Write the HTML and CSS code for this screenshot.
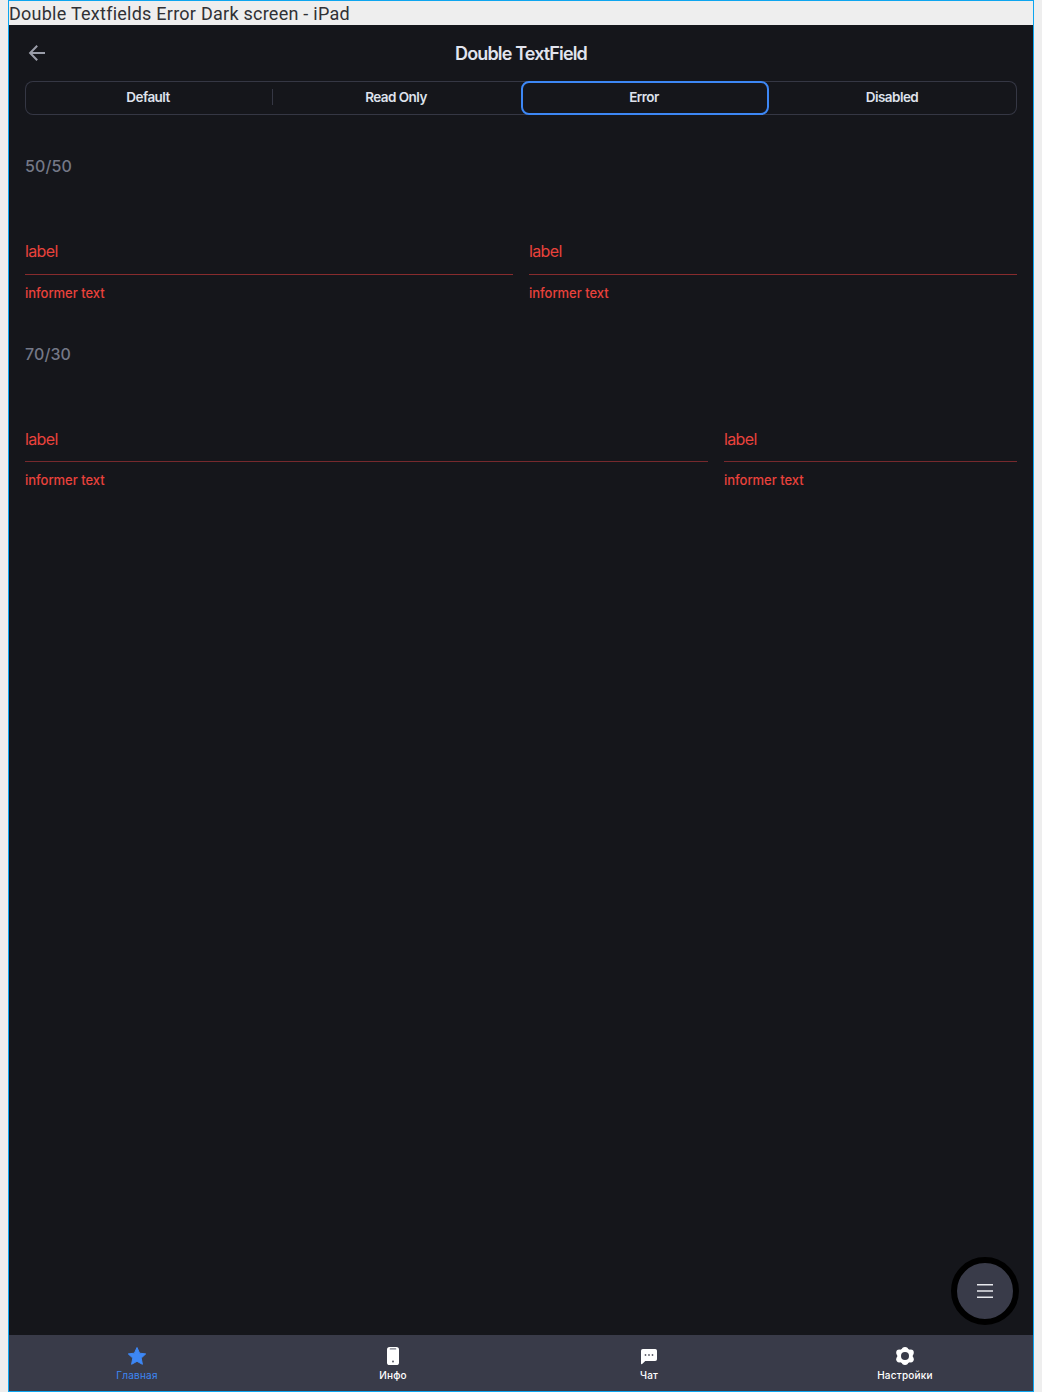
FILE: index.html
```html
<!DOCTYPE html>
<html lang="ru">
<head>
<meta charset="utf-8">
<title>Double TextField</title>
<link rel="stylesheet" href="styles.css">
</head>
<body>
<div class="frame">
  <div class="caption"><span>Double Textfields Error Dark screen - iPad</span></div>
  <div class="screen">
    <header class="header">
      <svg class="back" width="24" height="24" viewBox="0 0 24 24" fill="none" stroke="#9a9da9" stroke-width="2"><path d="M20 12H5.6M12.2 4.7L5.1 12l7.1 7.3"/></svg>
      <h1 class="title">Double TextField</h1>
    </header>
    <nav class="segments">
      <div class="segment divided"><span>Default</span></div>
      <div class="segment"><span>Read Only</span></div>
      <div class="segment selected"><span>Error</span></div>
      <div class="segment"><span>Disabled</span></div>
    </nav>
    <main class="content">
      <section class="group half">
        <h2 class="ratio"><span>50/50</span></h2>
        <div class="fields">
          <div class="field"><div class="label"><span>label</span></div><div class="informer"><span>informer text</span></div></div>
          <div class="field"><div class="label"><span>label</span></div><div class="informer"><span>informer text</span></div></div>
        </div>
      </section>
      <section class="group wide">
        <h2 class="ratio"><span>70/30</span></h2>
        <div class="fields">
          <div class="field"><div class="label"><span>label</span></div><div class="informer"><span>informer text</span></div></div>
          <div class="field"><div class="label"><span>label</span></div><div class="informer"><span>informer text</span></div></div>
        </div>
      </section>
    </main>
    <button class="fab" aria-label="Menu"><svg width="16" height="14" viewBox="0 0 16 14" fill="#e8e9ed"><path d="M0 0h16v1.6H0zM0 6.2h16v1.6H0zM0 12.4h16V14H0z"/></svg></button>
    <footer class="tabs">
      <div class="tab active">
        <svg width="24" height="24" viewBox="0 0 24 24"><path fill="#3d87f5" stroke="#3d87f5" stroke-width="1" stroke-linejoin="round" d="M12 3.5l2.6 5.7 6.1.7-4.5 4.2 1.2 6.2-5.4-3-5.4 3 1.2-6.2-4.5-4.2 6.1-.7z"/></svg>
        <span>Главная</span>
      </div>
      <div class="tab">
        <svg width="24" height="24" viewBox="0 0 24 24"><rect x="6" y="3" width="12" height="18" rx="2.6" fill="#fff"/><path d="M9.3 4.9h5.4" stroke="#777985" stroke-width="1.2" stroke-linecap="round"/><circle cx="12" cy="17.5" r=".9" fill="#494b58"/></svg>
        <span>Инфо</span>
      </div>
      <div class="tab">
        <svg width="24" height="24" viewBox="0 0 24 24"><path fill="#fff" d="M5.8 5h12.4A1.8 1.8 0 0 1 20 6.8v8.4a1.8 1.8 0 0 1-1.8 1.8H8.3l-3.2 3c-.5.4-1.1.1-1.1-.5V6.8A1.8 1.8 0 0 1 5.8 5z"/><g fill="#5a5c68"><circle cx="8.5" cy="11" r=".9"/><circle cx="12" cy="11" r=".9"/><circle cx="15.5" cy="11" r=".9"/></g></svg>
        <span>Чат</span>
      </div>
      <div class="tab">
        <svg width="24" height="24" viewBox="0 0 24 24"><g fill="#fff"><circle cx="12" cy="12" r="7.8"/><circle cx="12" cy="6.2" r="3.2"/><circle cx="17.7" cy="8.7" r="3.1"/><circle cx="17.7" cy="15.3" r="3.1"/><circle cx="12" cy="17.8" r="3.2"/><circle cx="6.3" cy="15.3" r="3.1"/><circle cx="6.3" cy="8.7" r="3.1"/></g><circle cx="12" cy="12" r="4" fill="#393b49"/></svg>
        <span>Настройки</span>
      </div>
    </footer>
  </div>
</div>
</body>
</html>
```
FILE: styles.css
```css
* { box-sizing: border-box; }

body {
  margin: 0;
  padding: 0 8px;
  background: #eee;
  font-family: Inter, "Liberation Sans", sans-serif;
}

.frame {
  width: 1026px;
  height: 1392px;
  border: 1px solid #0da5ef;
}

.caption {
  height: 24px;
  font: 400 18px/25px Roboto, sans-serif;
  letter-spacing: .25px;
  color: #303135;
  white-space: nowrap;
}

.screen {
  position: relative;
  display: flex;
  flex-direction: column;
  height: 1366px;
  background: #15161b;
}

.header {
  display: grid;
  grid-template-columns: 24px 1fr 24px;
  align-items: center;
  height: 56px;
  padding: 0 16px;
}

.title {
  margin: 0;
  padding-top: 2px;
  text-align: center;
  font-size: 18px;
  line-height: 24px;
  font-weight: 600;
  letter-spacing: -.86px;
  color: #e1e4ee;
}

.segments {
  display: grid;
  grid-template-columns: repeat(4, 1fr);
  height: 34px;
  margin: 0 16px;
  border-radius: 8px;
  box-shadow: inset 0 0 0 1px #353744;
}

.segment {
  display: flex;
  align-items: center;
  justify-content: center;
  padding: 0 2px 3px 0;
  font-size: 13.5px;
  font-weight: 600;
  letter-spacing: -.55px;
  color: #dfe2ec;
}

.divided {
  background: linear-gradient(#353744, #353744) right 0 top 8px / 1px 16px no-repeat;
}

.selected {
  border: 2px solid #3d87f5;
  border-radius: 8px;
  background: #15161b;
}

.content { flex: 1; padding: 0 16px; }

.group { padding-top: 39px; height: 188px; }

.ratio {
  margin: 0;
  height: 24px;
  font-size: 16px;
  line-height: 24px;
  font-weight: 500;
  letter-spacing: .1px;
  color: #747887;
}

.fields {
  display: grid;
  gap: 16px;
  padding-top: 57px;
}

.half .fields { grid-template-columns: 488px 488px; }
.wide .fields { grid-template-columns: 683px 293px; }

.label {
  height: 40px;
  padding-top: 4px;
  border-bottom: 1px solid #872b2d;
  font-size: 16px;
  line-height: 24px;
  letter-spacing: -.65px;
  color: #e9423c;
}

.wide .label { height: 39px; border-color: #76292d; }

.informer {
  padding-top: 8px;
  font-size: 13px;
  line-height: 20px;
  font-weight: 500;
  letter-spacing: -.03px;
  color: #e9423c;
}

.fab {
  position: absolute;
  right: 14px;
  bottom: 66px;
  display: flex;
  align-items: center;
  justify-content: center;
  width: 68px;
  height: 68px;
  padding: 0;
  border: 6px solid #000;
  border-radius: 50%;
  background: #393b49;
}

.tabs {
  display: grid;
  grid-template-columns: repeat(4, 1fr);
  height: 56px;
  background: #393b49;
}

.tab {
  display: flex;
  flex-direction: column;
  align-items: center;
  padding-top: 9px;
  font-size: 10px;
  line-height: 14px;
  font-weight: 500;
  letter-spacing: .22px;
  color: #fff;
}

.active { color: #3d87f5; font-weight: 400; }
```
